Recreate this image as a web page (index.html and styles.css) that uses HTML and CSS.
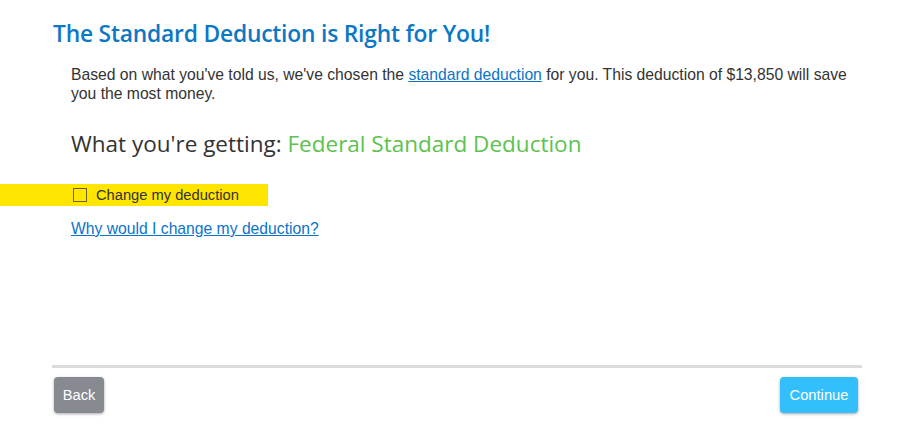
FILE: index.html
```html
<!DOCTYPE html>
<html>
<head>
<meta charset="utf-8">
<link rel="stylesheet" href="styles.css">
</head>
<body>
<div class="page">
  <h1 class="title">The Standard Deduction is Right for You!</h1>
  <div class="content">
    <p class="intro">Based on what you've told us, we've chosen the <a href="#" class="link">standard deduction</a> for you. This deduction of $13,850 will save you the most money.</p>
    <h2 class="getting">What you're getting: <span class="green">Federal Standard Deduction</span></h2>
  </div>
  <label class="change-row"><span class="box"></span><span class="change-text">Change my deduction</span></label>
  <div class="content">
    <a href="#" class="link why">Why would I change my deduction?</a>
  </div>
  <div class="footer">
    <button class="btn back">Back</button>
    <button class="btn continue">Continue</button>
  </div>
</div>
</body>
</html>
```

FILE: styles.css
```css
* { box-sizing: border-box; }
body {
  margin: 0;
  background: #fff;
  font-family: "Liberation Sans", Arial, sans-serif;
  color: #333;
}
.page {
  width: 924px;
  height: 442px;
  display: flex;
  flex-direction: column;
}
.title {
  margin: 20px 0 0 53px;
  font-family: "Open Sans", sans-serif;
  font-weight: 600;
  font-size: 22.8px;
  line-height: 28px;
  color: #0b78c6;
  letter-spacing: -0.2px;
}
.content {
  padding-left: 71px;
  padding-right: 66px;
}
.intro {
  margin: 17px 0 0 0;
  font-size: 15.7px;
  line-height: 19px;
  color: #333;
}
.link {
  color: #0b74c8;
  text-decoration: underline;
}
.getting {
  margin: 26px 0 0 0;
  font-family: "Open Sans", sans-serif;
  font-weight: 400;
  font-size: 22.5px;
  line-height: 30px;
  color: #333;
}
.green { color: #5bc24f; }
.change-row {
  margin-top: 25px;
  width: 268px;
  height: 22px;
  background: #ffe500;
  display: flex;
  align-items: center;
  padding-left: 73px;
  font-size: 14.7px;
  color: #333;
}
.box {
  width: 14px;
  height: 14px;
  border: 1px solid #6b6420;
  margin-right: 9px;
}
.why {
  display: inline-block;
  margin-top: 15px;
  font-size: 15.7px;
  line-height: 16px;
}
.footer {
  margin: auto 62px 29px 52px;
  border-top: 3px solid #dcdcdc;
  padding-top: 9px;
  display: flex;
  justify-content: space-between;
}
.btn {
  height: 36px;
  border: none;
  border-radius: 4px;
  color: #fff;
  font-family: "Liberation Sans", Arial, sans-serif;
  font-size: 14.7px;
  box-shadow: 0 1px 3px rgba(0,0,0,0.35);
  padding: 0 8px;
}
.back {
  margin-left: 2px;
  background: #878a91;
  width: 50px;
}
.continue {
  margin-right: 4px;
  background: #33bffc;
  width: 78px;
}
```
